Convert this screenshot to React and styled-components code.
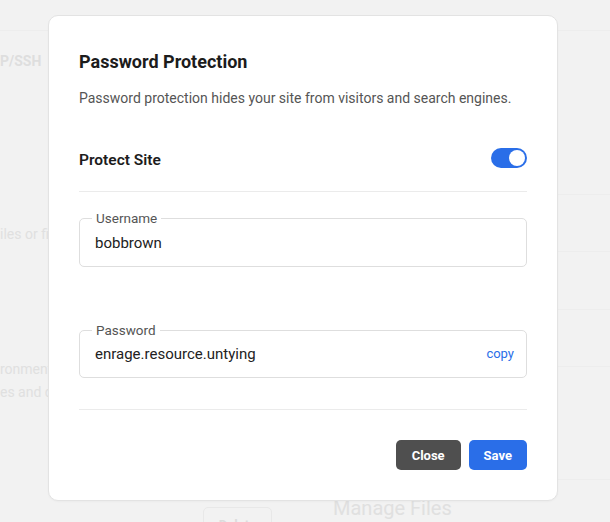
import React from "react";
import styled, { createGlobalStyle } from "styled-components";

const GlobalStyle = createGlobalStyle`
  html, body { margin: 0; padding: 0; }
  body {
    background: #f2f2f2;
    font-family: Roboto, "Noto Sans", "Liberation Sans", sans-serif;
    -webkit-font-smoothing: antialiased;
  }
  * { box-sizing: border-box; }
`;

const Page = styled.div`
  position: relative;
  width: 610px;
  height: 522px;
  overflow: hidden;
  background: #f2f2f2;
`;

const BgTopBar = styled.div`
  height: 31px;
  border-bottom: 1px solid #ededed;
`;

const BgBody = styled.div`
  display: flex;
  height: 491px;
`;

const BgLeft = styled.div`
  flex: 1;
  display: flex;
  flex-direction: column;
`;

const BgHeading = styled.div`
  margin-top: 21px;
  font-size: 14px;
  line-height: 18px;
  font-weight: 700;
  color: #dedede;
  white-space: nowrap;
`;

const BgText = styled.div`
  margin-top: ${(p) => p.$top || 0}px;
  font-size: 14px;
  line-height: 23px;
  color: #e0e0e0;
  white-space: nowrap;
`;

const BgBottom = styled.div`
  margin-top: auto;
  display: flex;
  align-items: flex-start;
  padding-left: 203px;
  gap: 61px;
  height: 15px;
`;

const BgButton = styled.div`
  flex: none;
  width: 69px;
  height: 30px;
  border: 1px solid #e8e8e8;
  border-radius: 5px;
  display: flex;
  justify-content: center;
  padding-top: 9px;
  font-size: 13px;
  font-weight: 700;
  color: #dcdcdc;
`;

const BgTitle = styled.div`
  font-size: 20px;
  line-height: 24px;
  color: #e0e0e0;
  margin-top: -11px;
  white-space: nowrap;
`;

const BgRight = styled.div`
  width: 53px;
  display: flex;
  flex-direction: column;
`;

const BgRow = styled.div`
  flex: none;
  height: ${(p) => p.$h}px;
  border-bottom: 1px solid #ededed;
`;

const Overlay = styled.div`
  position: absolute;
  inset: 0;
  display: flex;
  align-items: flex-start;
  padding: 15px 0 0 48px;
`;

const Modal = styled.div`
  width: 510px;
  height: 486px;
  background: #ffffff;
  border: 1px solid #e3e3e3;
  border-radius: 10px;
  padding: 30px;
  display: flex;
  flex-direction: column;
  box-shadow: 0 1px 2px rgba(0, 0, 0, 0.03);
`;

const Title = styled.h2`
  margin: 5px 0 0;
  font-size: 18px;
  line-height: 22px;
  font-weight: 700;
  color: #1c1c1c;
`;

const Description = styled.p`
  margin: 15px 0 0;
  font-size: 14px;
  line-height: 20px;
  color: #555555;
`;

const ToggleRow = styled.div`
  margin-top: 40px;
  height: 20px;
  display: flex;
  align-items: center;
  justify-content: space-between;
`;

const ToggleLabel = styled.span`
  font-size: 15.5px;
  font-weight: 600;
  color: #1c1c1c;
  line-height: 20px;
  position: relative;
  top: 2px;
`;

const Switch = styled.button`
  width: 36px;
  height: 20px;
  border-radius: 10px;
  border: none;
  padding: 2px;
  background: ${(p) => (p.$on ? "#2a6ee8" : "#cccccc")};
  display: flex;
  justify-content: ${(p) => (p.$on ? "flex-end" : "flex-start")};
  cursor: pointer;
`;

const Knob = styled.span`
  width: 16px;
  height: 16px;
  border-radius: 50%;
  background: #ffffff;
`;

const Divider = styled.hr`
  margin: ${(p) => p.$top}px 0 0;
  border: none;
  border-top: 1px solid #ebebeb;
  height: 0;
`;

const Field = styled.div`
  position: relative;
  margin-top: ${(p) => p.$top}px;
  height: ${(p) => p.$h}px;
  border: 1px solid #dedede;
  border-radius: 5px;
  display: flex;
  align-items: center;
  justify-content: space-between;
  padding: 0 12px 0 15px;
`;

const FieldLabel = styled.span`
  position: absolute;
  top: -9px;
  left: 12px;
  padding: 0 4px;
  background: #ffffff;
  font-size: 13.5px;
  line-height: 16px;
  color: #555555;
`;

const FieldValue = styled.span`
  font-size: 15px;
  color: #222222;
  padding-top: 1px;
`;

const CopyLink = styled.button`
  border: none;
  background: none;
  padding: 0;
  font-family: inherit;
  font-size: 13px;
  color: #2a6ee8;
  cursor: pointer;
`;

const Actions = styled.div`
  margin-top: 30px;
  display: flex;
  justify-content: flex-end;
  gap: 8px;
`;

const Button = styled.button`
  height: 30px;
  padding: 0 ${(p) => (p.$primary ? 15 : 16)}px;
  border: none;
  border-radius: 5px;
  font-family: inherit;
  font-size: 13px;
  font-weight: 700;
  color: #ffffff;
  background: ${(p) => (p.$primary ? "#2a6ee8" : "#4f4f4f")};
  cursor: pointer;
`;

export default function App() {
  return (
    <>
      <GlobalStyle />
      <Page>
        <BgTopBar />
        <BgBody>
          <BgLeft>
            <BgHeading>P/SSH</BgHeading>
            <BgText $top={153}>iles or files</BgText>
            <BgText $top={112}>ronment</BgText>
            <BgText>es and databases</BgText>
            <BgBottom>
              <BgButton>Delete</BgButton>
              <BgTitle>Manage Files</BgTitle>
            </BgBottom>
          </BgLeft>
          <BgRight>
            <BgRow $h={164} />
            <BgRow $h={57} />
            <BgRow $h={58} />
            <BgRow $h={57} />
            <BgRow $h={113} />
          </BgRight>
        </BgBody>
        <Overlay>
          <Modal>
            <Title>Password Protection</Title>
            <Description>
              Password protection hides your site from visitors and search engines.
            </Description>
            <ToggleRow>
              <ToggleLabel>Protect Site</ToggleLabel>
              <Switch $on aria-label="Protect Site">
                <Knob />
              </Switch>
            </ToggleRow>
            <Divider $top={23} />
            <Field $top={26} $h={49}>
              <FieldLabel>Username</FieldLabel>
              <FieldValue>bobbrown</FieldValue>
            </Field>
            <Field $top={63} $h={49}>
              <FieldLabel>Password</FieldLabel>
              <FieldValue>enrage.resource.untying</FieldValue>
              <CopyLink>copy</CopyLink>
            </Field>
            <Divider $top={31} />
            <Actions>
              <Button>Close</Button>
              <Button $primary>Save</Button>
            </Actions>
          </Modal>
        </Overlay>
      </Page>
    </>
  );
}
